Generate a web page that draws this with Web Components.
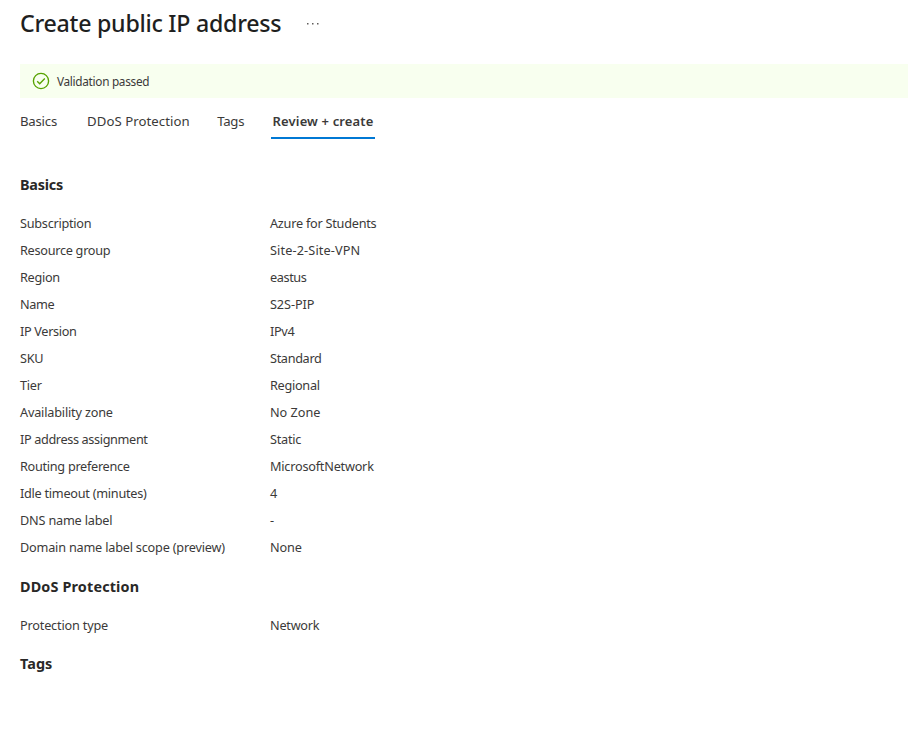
<!DOCTYPE html>
<html lang="en">
<head>
<meta charset="utf-8">
<title>Create public IP address</title>
<style>
  body { margin: 0; background: #fff; color: #3b3a39; font: 12.7px/18px "Noto Sans", "Open Sans", sans-serif; overflow: hidden; }
</style>
</head>
<body>
<ip-review-page></ip-review-page>
<script>
// Text run whose tracking is adjusted so that it takes the width given in "run".
class TextRun extends HTMLElement {
  constructor() {
    super();
    this.attachShadow({ mode: 'open' }).innerHTML =
      '<style>:host{display:inline-block;white-space:nowrap}</style><slot></slot>';
  }
  connectedCallback() {
    const target = parseFloat(this.getAttribute('run'));
    const count = this.textContent.length;
    if (!target || !count) return;
    const natural = this.getBoundingClientRect().width;
    this.style.letterSpacing = ((target - natural) / count).toFixed(3) + 'px';
  }
}

class PageTitle extends HTMLElement {
  constructor() {
    super();
    this.attachShadow({ mode: 'open' }).innerHTML = `
      <style>
        :host { display: flex; height: 64px; }
        h1 { margin: 0; padding-top: 7px; font-size: 23.2px; line-height: 32px; font-weight: 500; color: #1f1f1f; }
        svg { display: block; margin: 22px 0 0 24.7px; }
      </style>
      <h1><slot></slot></h1>
      <svg width="14" height="4" fill="#605e5c" role="img" aria-label="More">
        <rect x="1" y="1" width="1.5" height="1.5"/><rect x="6" y="1" width="1.5" height="1.5"/><rect x="11" y="1" width="1.5" height="1.5"/>
      </svg>`;
  }
}

class StatusBanner extends HTMLElement {
  constructor() {
    super();
    this.attachShadow({ mode: 'open' }).innerHTML = `
      <style>
        :host { display: flex; align-items: center; height: 34px; box-sizing: border-box; padding-left: 12px; gap: 7px; background: #f8ffef; font-size: 11.8px; }
        svg { display: block; }
      </style>
      <svg width="18" height="18" viewBox="0 0 18 18" fill="none" stroke="#57a300">
        <circle cx="9" cy="9" r="7.6" stroke-width="1.35"/><path d="M5.2 9.2l2.5 2.5 5.1-5.1" stroke-width="1.35"/>
      </svg>
      <span><slot></slot></span>`;
  }
}

class TabItem extends HTMLElement {
  constructor() {
    super();
    this.attachShadow({ mode: 'open' }).innerHTML = `
      <style>
        :host { display: block; box-sizing: border-box; height: 41px; padding-top: 14px; font-size: 13.2px; }
        :host([selected]) { font-weight: 600; font-size: 13px; padding-left: 1.4px; padding-right: 1.7px; border-bottom: 2px solid #0078d4; }
      </style>
      <slot></slot>`;
  }
}

class TabBar extends HTMLElement {
  constructor() {
    super();
    this.attachShadow({ mode: 'open' }).innerHTML = `
      <style>:host { display: flex; height: 41px; gap: 27px; }
        ::slotted(:nth-child(1)) { margin-right: 3px; }
        ::slotted(:nth-child(2)) { margin-right: 0.4px; }</style><slot></slot>`;
  }
}

class ReviewSection extends HTMLElement {
  constructor() {
    super();
    this.attachShadow({ mode: 'open' }).innerHTML = `
      <style>
        :host { display: block; }
        h2 { margin: 0 0 19px; font-size: 14.4px; line-height: 20px; font-weight: 700; color: #292827; }
        .rows { display: grid; row-gap: 9px; }
      </style>
      <h2><slot name="heading"></slot></h2>
      <div class="rows"><slot></slot></div>`;
  }
}

class ReviewRow extends HTMLElement {
  constructor() {
    super();
    this.attachShadow({ mode: 'open' }).innerHTML = `
      <style>:host { display: grid; grid-template-columns: 250px 1fr; height: 18px; line-height: 18px; }</style>
      <slot></slot>`;
  }
}

class IpReviewPage extends HTMLElement {
  connectedCallback() {
    const row = (k, kw, v, vw) =>
      `<review-row><div><text-run run="${kw}">${k}</text-run></div><div><text-run run="${vw}">${v}</text-run></div></review-row>`;
    this.attachShadow({ mode: 'open' }).innerHTML = `
      <style>
        :host { display: block; padding-left: 20px; }
        main { display: flex; flex-direction: column; gap: 21px; padding-top: 36px; }
        main > :last-child { margin-top: -1px; }
      </style>
      <page-title><text-run run="261.3">Create public IP address</text-run></page-title>
      <status-banner><text-run run="92.2">Validation passed</text-run></status-banner>
      <tab-bar>
        <tab-item><text-run run="37">Basics</text-run></tab-item>
        <tab-item><text-run run="102.8">DDoS Protection</text-run></tab-item>
        <tab-item><text-run run="27">Tags</text-run></tab-item>
        <tab-item selected><text-run run="100.9">Review + create</text-run></tab-item>
      </tab-bar>
      <main>
        <review-section><text-run slot="heading" run="43">Basics</text-run>
          ${row('Subscription', 71.3, 'Azure for Students', 106.4)}
          ${row('Resource group', 90.3, 'Site-2-Site-VPN', 90.3)}
          ${row('Region', 39.8, 'eastus', 36.5)}
          ${row('Name', 34.3, 'S2S-PIP', 44.3)}
          ${row('IP Version', 56.6, 'IPv4', 24.3)}
          ${row('SKU', 23.3, 'Standard', 51.5)}
          ${row('Tier', 21.6, 'Regional', 49.7)}
          ${row('Availability zone', 92.8, 'No Zone', 50.3)}
          ${row('IP address assignment', 127.6, 'Static', 31.2)}
          ${row('Routing preference', 109.7, 'MicrosoftNetwork', 103.7)}
          ${row('Idle timeout (minutes)', 126.6, '4', 7.2)}
          ${row('DNS name label', 92.3, '-', 5.5)}
          ${row('Domain name label scope (preview)', 204.8, 'None', 31.7)}
        </review-section>
        <review-section><text-run slot="heading" run="119.2">DDoS Protection</text-run>
          ${row('Protection type', 88, 'Network', 49.3)}
        </review-section>
        <review-section><text-run slot="heading" run="32.3">Tags</text-run></review-section>
      </main>`;
  }
}

customElements.define('page-title', PageTitle);
customElements.define('status-banner', StatusBanner);
customElements.define('tab-item', TabItem);
customElements.define('tab-bar', TabBar);
customElements.define('review-section', ReviewSection);
customElements.define('review-row', ReviewRow);
customElements.define('ip-review-page', IpReviewPage);
customElements.define('text-run', TextRun);
</script>
</body>
</html>
